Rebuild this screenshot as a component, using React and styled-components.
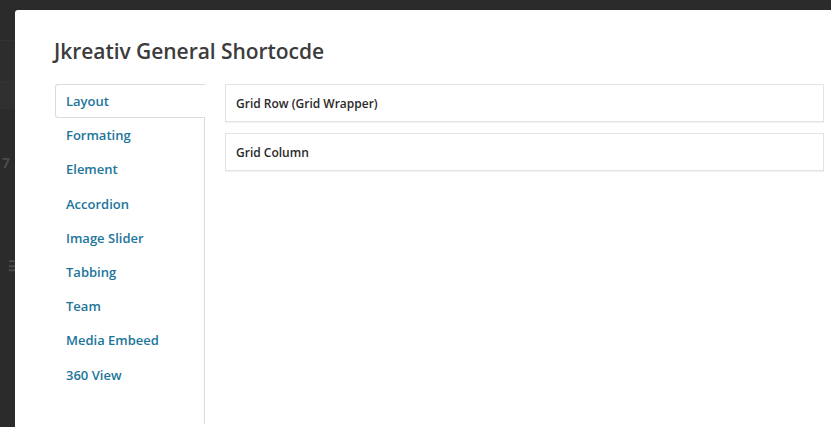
import React from "react";
import styled, { createGlobalStyle } from "styled-components";

const Global = createGlobalStyle`
  html, body { margin: 0; padding: 0; }
  body {
    background: #2c2c2c;
    font-family: "Open Sans", "Noto Sans", sans-serif;
    overflow: hidden;
    width: 831px;
    height: 427px;
  }
`;

const Backdrop = styled.div`
  position: relative;
  width: 831px;
  height: 427px;
  background: #2b2b2b;
  overflow: hidden;
`;

const BackBand = styled.div`
  height: ${(p) => p.$h}px;
  margin-top: ${(p) => p.$mt}px;
  background: ${(p) => p.$bg};
  border-top: 1px solid #323232;
`;

const BackGlyph = styled.div`
  position: absolute;
  left: ${(p) => p.$x}px;
  top: ${(p) => p.$y}px;
  color: #4a4a4a;
  font-family: "Open Sans", sans-serif;
  font-weight: 700;
  font-size: 14px;
  line-height: 1;
`;

const Modal = styled.div`
  position: absolute;
  left: 15px;
  top: 10px;
  width: 840px;
  height: 440px;
  background: #fff;
  border-radius: 3px 0 0 0;
  box-sizing: border-box;
  padding: 27px 0 0 39px;
`;

const Title = styled.h1`
  margin: 0 0 19px 0;
  font-size: 21px;
  line-height: 28px;
  font-weight: 600;
  color: #3c3c3c;
  letter-spacing: -0.05px;
`;

const Body = styled.div`
  display: flex;
  gap: 20px;
  align-items: flex-start;
`;

const Tabs = styled.ul`
  list-style: none;
  margin: 0;
  padding: 0 0 0 1px;
  width: 151px;
  box-sizing: border-box;
  height: 340px;
  border-right: 1px solid #dcdcdc;
`;

const Tab = styled.li`
  height: 34.2px;
  box-sizing: border-box;
  display: flex;
  align-items: center;
  padding-left: 10px;
  margin-right: ${(p) => (p.$active ? "-1px" : "0")};
  background: #fff;
  border: 1px solid ${(p) => (p.$active ? "#dcdcdc" : "transparent")};
  border-right: none;
  border-radius: 3px 0 0 3px;
  font-size: 13px;
  font-weight: 600;
  color: #21759b;
`;

const Cards = styled.div`
  display: flex;
  flex-direction: column;
  gap: 11px;
  width: 599px;
`;

const Card = styled.div`
  height: 38px;
  box-sizing: border-box;
  border: 1px solid #e3e3e3;
  box-shadow: 0 1px 1px rgba(0, 0, 0, 0.05);
  display: flex;
  align-items: center;
  padding-left: 10px;
  font-size: 12px;
  font-weight: 600;
  color: #2a2a2a;
  background: #fff;
`;

const tabs = [
  "Layout",
  "Formating",
  "Element",
  "Accordion",
  "Image Slider",
  "Tabbing",
  "Team",
  "Media Embeed",
  "360 View",
];

export default function App() {
  return (
    <>
      <Global />
      <Backdrop>
        <BackBand $mt={40} $h={40} $bg="#2d2d2d" />
        <BackBand $mt={0} $h={27} $bg="#303030" />
        <BackGlyph $x={2} $y={156}>7</BackGlyph>
        <BackGlyph $x={8} $y={259}>☰</BackGlyph>
        <Modal>
          <Title>Jkreativ General Shortocde</Title>
          <Body>
            <Tabs>
              {tabs.map((t, i) => (
                <Tab key={t} $active={i === 0}>
                  {t}
                </Tab>
              ))}
            </Tabs>
            <Cards>
              <Card>Grid Row (Grid Wrapper)</Card>
              <Card>Grid Column</Card>
            </Cards>
          </Body>
        </Modal>
      </Backdrop>
    </>
  );
}
